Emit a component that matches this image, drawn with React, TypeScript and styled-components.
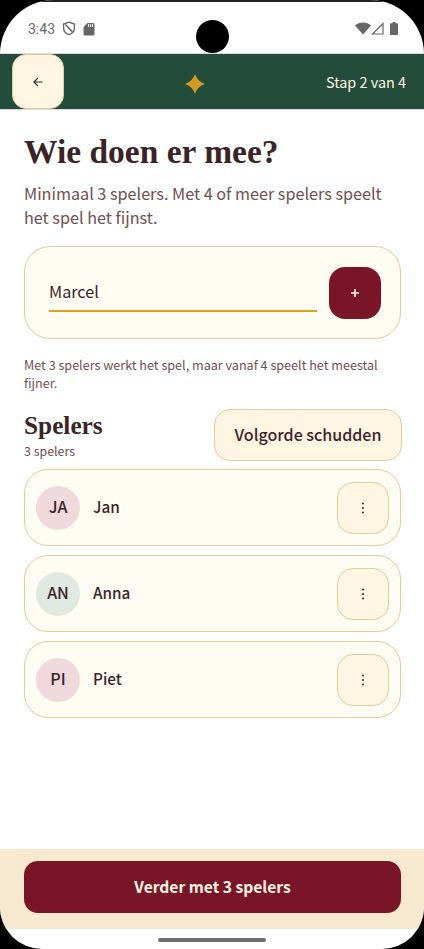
import React, { ReactElement } from 'react';
import styled, { createGlobalStyle } from 'styled-components';

const SANS = `"Noto Sans CJK SC", "Source Sans 3", "Noto Sans", sans-serif`;
const SERIF = `"Liberation Serif", serif`;

type PlayerType = {
  initials: string;
  name: string;
  tone: 'rose' | 'sage';
};

const players: PlayerType[] = [
  { initials: 'JA', name: 'Jan', tone: 'rose' },
  { initials: 'AN', name: 'Anna', tone: 'sage' },
  { initials: 'PI', name: 'Piet', tone: 'rose' },
];

const App = (): ReactElement => {
  return (
    <>
      <GlobalStyle />
      <Screen>
        <StatusBar>
          <StatusGroup>
            <Clock>3:43</Clock>
            <svg width="14" height="15" viewBox="0 0 14 15" fill="none" stroke="#666" strokeWidth="1.4">
              <path d="M7 1.2 12.4 3v4.2c0 3-2.2 5.2-5.4 6.4C3.800 12.400 1.600 10.200 1.600 7.200V3z" />
              <path d="M3.500 3.500 10.500 11" />
            </svg>
            <svg width="12" height="14" viewBox="0 0 12 14" fill="#666">
              <path d="M4.500 1H10a1.500 1.500 0 0 1 1.500 1.500v9.500A1.500 1.500 0 0 1 10 13.500H2A1.500 1.500 0 0 1 .5 12V5z" />
              <path d="M5.500 2.200v2.600M7.500 2.200v2.600M9.500 2.200v2.600" stroke="#fff" strokeWidth="1" />
            </svg>
          </StatusGroup>
          <StatusGroup $tight>
            <svg width="16" height="13" viewBox="0 0 16 13" fill="#666">
              <path d="M0 3.600C2 1.500 4.800.5 8 .5s6 1 8 3.100L8 12.500z" />
            </svg>
            <svg width="13" height="13" viewBox="0 0 13 13" fill="none" stroke="#666" strokeWidth="1.200">
              <path d="M12 1.500V12H1.500z" />
            </svg>
            <BatteryIcon width="8" height="13" viewBox="0 0 8 13" fill="#666">
              <path d="M2.500 0h3v1.200H7a1 1 0 0 1 1 1V12a1 1 0 0 1-1 1H1a1 1 0 0 1-1-1V2.200a1 1 0 0 1 1-1h1.500z" />
            </BatteryIcon>
          </StatusGroup>
        </StatusBar>
        <CameraHole />

        <Header>
          <BackButton aria-label="Terug">
            <svg width="10" height="10" viewBox="0 0 10 10" fill="none" stroke="#3A2428" strokeWidth="1.200">
              <path d="M9.500 5H1M4.800 1.200 1 5l3.800 3.800" />
            </svg>
          </BackButton>
          <HeaderStar>
            <svg width="20" height="20" viewBox="0 0 20 20" fill="#D19A21">
              <path d="M10 0Q12.500 7.500 20 10Q12.500 12.500 10 20Q7.500 12.500 0 10Q7.500 7.500 10 0z" />
            </svg>
          </HeaderStar>
          <StepLabel>Stap 2 van 4</StepLabel>
        </Header>

        <Content>
          <Title>Wie doen er mee?</Title>
          <Intro>Minimaal 3 spelers. Met 4 of meer spelers speelt het spel het fijnst.</Intro>

          <InputCard>
            <NameField>Marcel</NameField>
            <AddButton aria-label="Toevoegen">
              <svg width="8" height="8" viewBox="0 0 8 8" stroke="#FFF5E3" strokeWidth="1.700">
                <path d="M4 0v8M0 4h8" />
              </svg>
            </AddButton>
          </InputCard>

          <Hint>Met 3 spelers werkt het spel, maar vanaf 4 speelt het meestal fijner.</Hint>

          <PlayersHead>
            <div>
              <PlayersTitle>Spelers</PlayersTitle>
              <PlayersCount>3 spelers</PlayersCount>
            </div>
            <ShuffleButton>Volgorde schudden</ShuffleButton>
          </PlayersHead>

          <PlayerList>
            {players.map((player) => (
              <PlayerRow key={player.name}>
                <Avatar $tone={player.tone}>{player.initials}</Avatar>
                <PlayerName>{player.name}</PlayerName>
                <MenuButton aria-label="Menu">
                  <svg width="4" height="12" viewBox="0 0 4 12" fill="#3A2428">
                    <circle cx="2" cy="1.500" r="1" />
                    <circle cx="2" cy="6" r="1" />
                    <circle cx="2" cy="10.500" r="1" />
                  </svg>
                </MenuButton>
              </PlayerRow>
            ))}
          </PlayerList>
        </Content>

        <Footer>
          <NextButton>Verder met 3 spelers</NextButton>
        </Footer>
        <NavArea>
          <NavHandle />
        </NavArea>
      </Screen>
    </>
  );
};

const GlobalStyle = createGlobalStyle`
  html, body {
    margin: 0;
    padding: 0;
    background: #000;
  }
  * {
    box-sizing: border-box;
  }
`;

const Screen = styled.div`
  width: 424px;
  height: 949px;
  position: relative;
  display: flex;
  flex-direction: column;
  overflow: hidden;
  background: #fff;
  border-radius: 54px 54px 42px 42px;
  font-family: ${SANS};
  color: #3a2428;
`;

const StatusBar = styled.div`
  height: 54px;
  padding: 2px 26px 0 28px;
  display: flex;
  align-items: center;
  justify-content: space-between;
  flex-shrink: 0;
  border-top: 2px solid #222;
  border-bottom: 1px solid #d9d9d9;
`;

const StatusGroup = styled.div<{ $tight?: boolean }>`
  display: flex;
  align-items: center;
  gap: ${({ $tight }) => ($tight ? '0' : '7px')};
`;

const BatteryIcon = styled.svg`
  margin-left: 6px;
`;

const Clock = styled.span`
  font-family: 'Roboto', sans-serif;
  font-size: 14px;
  color: #6a6a6a;
`;

const CameraHole = styled.div`
  position: absolute;
  top: 20px;
  left: 196px;
  width: 33px;
  height: 33px;
  border-radius: 50%;
  background: #000;
`;

const Header = styled.header`
  height: 56px;
  padding: 0 18px 0 12px;
  display: flex;
  align-items: center;
  justify-content: space-between;
  flex-shrink: 0;
  position: relative;
  background: #234d3a;
  border-bottom: 1px solid #d9d9d9;
`;

const BackButton = styled.button`
  width: 52px;
  height: 55px;
  padding: 0;
  display: flex;
  align-items: center;
  justify-content: center;
  background: #fff5e3;
  border: 1px solid #e3cb9a;
  border-radius: 14px;
`;

const HeaderStar = styled.div`
  position: absolute;
  left: 185px;
  top: 20px;
  display: flex;
`;

const StepLabel = styled.span`
  font-size: 14.4px;
  color: #fff5e3;
`;

const Content = styled.main`
  flex: 1;
  padding: 22px 23px 0 24px;
  display: flex;
  flex-direction: column;
`;

const Title = styled.h1`
  margin: 0;
  font-family: ${SERIF};
  font-size: 33.5px;
  line-height: 40px;
  font-weight: bold;
  color: #3a2428;
`;

const Intro = styled.p`
  margin: 9px 0 0;
  font-size: 16.2px;
  line-height: 24px;
  color: #6f4f4f;
`;

const InputCard = styled.div`
  height: 93px;
  margin-top: 17px;
  padding: 0 19px 0 24px;
  display: flex;
  align-items: center;
  gap: 12px;
  background: #fffcf4;
  border: 1px solid #e3cb9a;
  border-radius: 26px;
`;

const NameField = styled.div`
  flex: 1;
  height: 42px;
  margin-bottom: 3px;
  padding-top: 9px;
  font-size: 16.2px;
  line-height: 24px;
  color: #3a2428;
  border-bottom: 2px solid #e0a020;
`;

const AddButton = styled.button`
  width: 52px;
  height: 52px;
  padding: 0;
  display: flex;
  align-items: center;
  justify-content: center;
  flex-shrink: 0;
  background: #7a1528;
  border: none;
  border-radius: 16px;
`;

const Hint = styled.p`
  margin: 17px 0 0;
  font-size: 12.6px;
  line-height: 18px;
  color: #6f4f4f;
`;

const PlayersHead = styled.div`
  margin-top: 17px;
  display: flex;
  align-items: center;
  justify-content: space-between;
`;

const PlayersTitle = styled.h2`
  margin: 0;
  font-family: ${SERIF};
  font-size: 25.3px;
  line-height: 30px;
  font-weight: bold;
  color: #3a2428;
`;

const PlayersCount = styled.div`
  margin-top: 1px;
  font-size: 12.4px;
  line-height: 20px;
  color: #6f4f4f;
`;

const ShuffleButton = styled.button`
  width: 188px;
  height: 52px;
  margin-right: -1px;
  padding: 0 0 2px;
  font-family: ${SANS};
  font-size: 16px;
  font-weight: 500;
  color: #3a2428;
  background: #fff5e3;
  border: 1px solid #e3cb9a;
  border-radius: 16px;
`;

const PlayerList = styled.div`
  margin-top: 8px;
  display: flex;
  flex-direction: column;
  gap: 9px;
`;

const PlayerRow = styled.div`
  height: 77px;
  padding: 0 11px 0 12px;
  display: flex;
  align-items: center;
  background: #fffcf4;
  border: 1px solid #e3cb9a;
  border-radius: 24px;
`;

const Avatar = styled.div<{ $tone: PlayerType['tone'] }>`
  width: 44px;
  height: 44px;
  margin-left: -1px;
  padding-bottom: 3px;
  display: flex;
  align-items: center;
  justify-content: center;
  flex-shrink: 0;
  border-radius: 50%;
  font-size: 16px;
  font-weight: 500;
  background: ${({ $tone }) => ($tone === 'rose' ? '#f0d9da' : '#dfe9e0')};
`;

const PlayerName = styled.span`
  flex: 1;
  margin-left: 13px;
  padding-bottom: 3px;
  font-size: 15.3px;
  font-weight: 500;
`;

const MenuButton = styled.button`
  width: 52px;
  height: 52px;
  padding: 0;
  display: flex;
  align-items: center;
  justify-content: center;
  background: #fff5e3;
  border: 1px solid #e3cb9a;
  border-radius: 16px;
`;

const Footer = styled.footer`
  height: 80px;
  padding: 12px 23px 0 24px;
  flex-shrink: 0;
  background: #f7e8d0;
`;

const NextButton = styled.button`
  width: 100%;
  height: 52px;
  padding: 0 0 2px;
  font-family: ${SANS};
  font-size: 15.6px;
  font-weight: 700;
  color: #fff5e3;
  background: #7a1528;
  border: none;
  border-radius: 14px;
`;

const NavArea = styled.div`
  height: 20px;
  display: flex;
  justify-content: center;
  align-items: flex-start;
  padding-top: 9px;
  flex-shrink: 0;
`;

const NavHandle = styled.div`
  width: 108px;
  height: 4px;
  background: #6e6e6e;
  border-radius: 2px;
`;

export default App;
